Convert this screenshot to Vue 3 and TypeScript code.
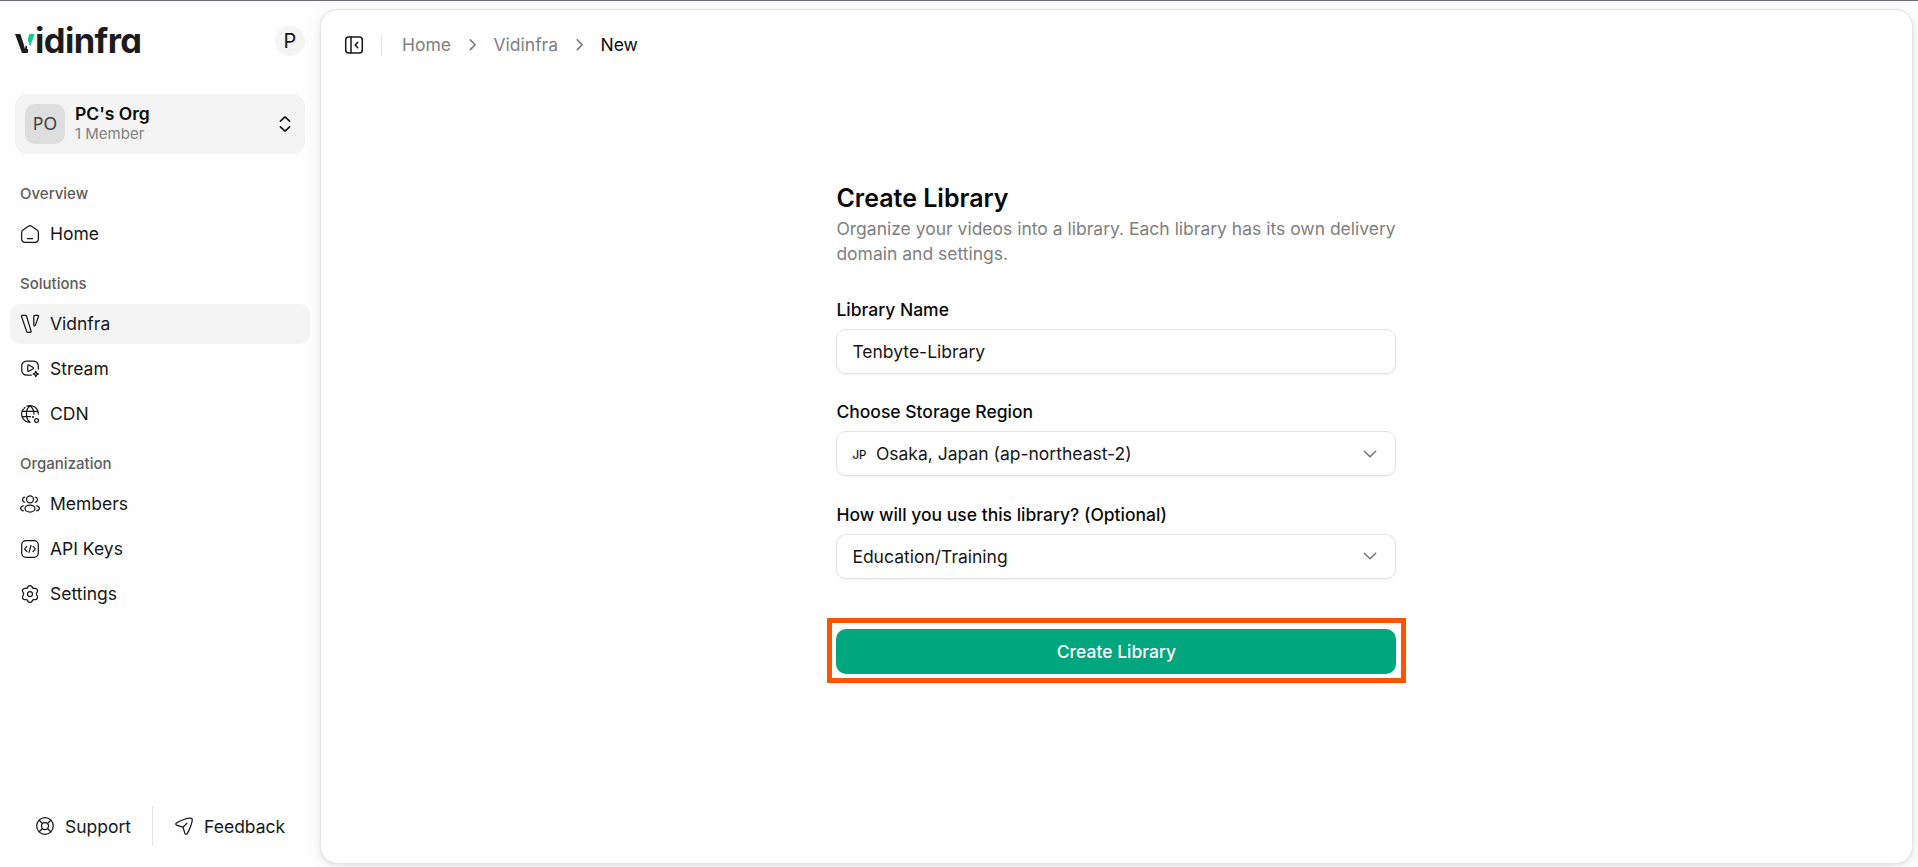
<script setup lang="ts">
interface NavItem {
  label: string
  icon: string
  active?: boolean
}
interface NavGroup {
  title: string
  items: NavItem[]
}

const groups: NavGroup[] = [
  { title: 'Overview', items: [{ label: 'Home', icon: 'home' }] },
  {
    title: 'Solutions',
    items: [
      { label: 'Vidnfra', icon: 'vid', active: true },
      { label: 'Stream', icon: 'stream' },
      { label: 'CDN', icon: 'cdn' },
    ],
  },
  {
    title: 'Organization',
    items: [
      { label: 'Members', icon: 'members' },
      { label: 'API Keys', icon: 'api' },
      { label: 'Settings', icon: 'settings' },
    ],
  },
]
</script>

<template>
  <div class="app">
    <aside class="sidebar">
      <header class="brand-row">
        <div class="logo"><span class="logo-v">v</span><span class="logo-rest">idinfra</span></div>
        <div class="user">P</div>
      </header>

      <div class="org">
        <div class="org-avatar">PO</div>
        <div class="org-text">
          <span class="org-name">PC's Org</span>
          <span class="org-sub">1 Member</span>
        </div>
        <svg class="updown" viewBox="0 0 20 20"><path d="M5.4 7.2 10 2.8l4.6 4.400M5.400 12.800l4.600 4.400 4.600-4.400" /></svg>
      </div>

      <nav class="nav">
        <section v-for="g in groups" :key="g.title" class="group">
          <h2 class="group-title">{{ g.title }}</h2>
          <div class="items">
            <a v-for="i in g.items" :key="i.label" class="item" :class="{ active: i.active }">
              <svg class="icon" viewBox="0 0 20 20">
                <template v-if="i.icon === 'home'">
                  <path d="M3.2 5.7 8.4 2.200a2.700 2.700 0 0 1 3.200 0l5.200 3.500c1 .7 1.600 1.900 1.600 3.100v5.900a3.700 3.700 0 0 1-3.700 3.600H5.300a3.700 3.700 0 0 1-3.700-3.600V8.800c0-1.200.6-2.400 1.600-3.100ZM7.400 14.500h5.200" />
                </template>
                <template v-else-if="i.icon === 'vid'">
                  <path d="M2.300 1.400h3.200c.5 0 .8.3 1 .7l4.600 15c.2.700-.1 1.200-.8 1.200H7.700c-.5 0-.9-.3-1-.700L1.500 2.500c-.2-.600.1-1.100.8-1.100ZM14.700 1.400h3c.700 0 1 .5.800 1.100l-3 8.400c-.2.600-.5.900-.9.900-.5 0-.8-.3-.8-.900V2.300c0-.5.400-.9.900-.9Z" />
                </template>
                <template v-else-if="i.icon === 'stream'">
                  <path d="M18.300 10V7A5 5 0 0 0 13.300 2H6.700a5 5 0 0 0-5 5v4.200a5 5 0 0 0 5 5h4.500" />
                  <path d="M7.800 6.500v5.200c0 .6.600.9 1.100.600l4.300-2.500c.5-.3.500-1 0-1.300L8.900 6c-.5-.3-1.100 0-1.100.500Z" />
                  <path d="m15.800 12.300.8 1.900 1.900.8-1.900.8-.8 1.900-.8-1.900-1.900-.8 1.900-.8.800-1.900Z" />
                </template>
                <template v-else-if="i.icon === 'cdn'">
                  <path d="M18.300 10A8.300 8.300 0 0 0 7 2.200M3.300 5.100A8.300 8.300 0 0 0 10 18.300M2 7.300h16M2 12.700h8.500M10 1.700c3 2.300 4 5 4 8.300M10 1.700C5.200 5.500 5.200 14.500 10 18.300" />
                  <circle cx="16.600" cy="16.600" r="1.900" />
                  <circle class="solid" cx="4.600" cy="3.800" r=".9" />
                  <circle class="solid" cx="13" cy="12.900" r="1" />
                </template>
                <template v-else-if="i.icon === 'members'">
                  <circle cx="10" cy="5.300" r="3.500" />
                  <ellipse cx="10" cy="14.600" rx="5" ry="3.500" />
                  <path d="M4.600 3.200a2.500 2.500 0 0 0 0 4.900M15.400 3.200a2.500 2.500 0 0 1 0 4.900M3.300 11.800c-3.500.8-3.500 4.200 0 5M16.700 11.800c3.500.8 3.500 4.200 0 5" />
                </template>
                <template v-else-if="i.icon === 'api'">
                  <rect x="1.700" y="1.700" width="16.600" height="16.600" rx="4.300" />
                  <path d="M6.900 7.400 5.200 9.100a1.200 1.200 0 0 0 0 1.700l1.700 1.700M13.100 7.400l1.700 1.700c.5.5.5 1.200 0 1.700l-1.700 1.700M11 6.500 9 13.400" />
                </template>
                <template v-else>
                  <circle cx="10" cy="10" r="2.500" />
                  <path d="M8 2.600C8.400 1.900 9 1.600 10 1.600s1.600.3 2 1l.5 1c.3.600 1 .9 1.600.8l1.100-.1c.8 0 1.500.4 2 1.300.5.900.6 1.600.1 2.300l-.6.9c-.4.700-.4 1.700 0 2.400l.6.900c.5.700.4 1.400-.1 2.300-.5.900-1.200 1.300-2 1.300l-1.100-.1c-.6-.1-1.300.2-1.600.8l-.5 1c-.4.700-1 1-2 1s-1.600-.3-2-1l-.5-1c-.3-.6-1-.9-1.600-.8l-1.100.1c-.8 0-1.500-.4-2-1.300-.5-.9-.6-1.600-.1-2.300l.6-.9c.4-.7.4-1.700 0-2.400l-.6-.9c-.5-.7-.4-1.400.1-2.300.5-.9 1.200-1.300 2-1.300l1.100.1c.6.100 1.300-.2 1.600-.8l.5-1Z" />
                </template>
              </svg>
              <span class="item-label">{{ i.label }}</span>
            </a>
          </div>
        </section>
      </nav>

      <footer class="foot">
        <a class="foot-link">
          <svg class="icon" viewBox="0 0 20 20">
            <circle cx="10" cy="10" r="8.300" /><circle cx="10" cy="10" r="3.500" />
            <path d="m4.200 4.200 3.300 3.300M15.800 4.200l-3.300 3.300M4.200 15.800l3.300-3.300M15.800 15.800l-3.300-3.300" />
          </svg>
          <span>Support</span>
        </a>
        <span class="foot-sep"></span>
        <a class="foot-link">
          <svg class="icon" viewBox="0 0 20 20">
            <path d="M9 11.200 12.900 7.300M17 2.200C14 1.500 5.500 4.700 2.400 7c-.9.700-.8 1.700.2 2.100L9 11.200l1.900 6.200c.4 1.100 1.600 1.200 2.300.2 2.200-3.200 5.300-11.700 5-14.200-.1-.7-.5-1.100-1.200-1.200Z" />
          </svg>
          <span>Feedback</span>
        </a>
      </footer>
    </aside>

    <main class="panel">
      <div class="crumbs">
        <svg class="icon toggle" viewBox="0 0 20 20"><rect x="1.700" y="2" width="16.600" height="16" rx="3" /><path d="M7 2v16M13.800 7.300 11.200 10l2.600 2.700" /></svg>
        <span class="crumb-sep"></span>
        <span class="crumb">Home</span>
        <svg class="chev" viewBox="0 0 18 18"><path d="m6.500 4 5 5-5 5" /></svg>
        <span class="crumb">Vidinfra</span>
        <svg class="chev" viewBox="0 0 18 18"><path d="m6.500 4 5 5-5 5" /></svg>
        <span class="crumb current">New</span>
      </div>

      <form class="form" @submit.prevent>
        <h1 class="title">Create Library</h1>
        <p class="desc">Organize your videos into a library. Each library has its own delivery domain and settings.</p>

        <div class="field">
          <label class="label">Library Name</label>
          <div class="control">Tenbyte-Library</div>
        </div>
        <div class="field">
          <label class="label">Choose Storage Region</label>
          <div class="control">
            <span class="flag">JP</span>
            <span>Osaka, Japan (ap-northeast-2)</span>
            <svg class="caret" viewBox="0 0 20 20"><path d="m4.300 7.300 5.700 5.500 5.700-5.500" /></svg>
          </div>
        </div>
        <div class="field">
          <label class="label">How will you use this library? (Optional)</label>
          <div class="control">
            <span>Education/Training</span>
            <svg class="caret" viewBox="0 0 20 20"><path d="m4.300 7.300 5.700 5.500 5.700-5.500" /></svg>
          </div>
        </div>

        <div class="highlight"><button class="submit" type="submit">Create Library</button></div>
      </form>
    </main>
  </div>
</template>

<style>
body {
  margin: 0;
  overflow: hidden;
}
</style>

<style scoped>
.app {
  box-sizing: border-box;
  width: 100vw;
  height: 100vh;
  display: flex;
  overflow: hidden;
  border-top: 1px solid #6b6b76;
  background: #fefefe;
  color: #171717;
  font-family: Inter, 'Liberation Sans', sans-serif;
  font-size: 17.5px;
}
svg {
  display: block;
  flex: none;
  fill: none;
  stroke: currentColor;
  stroke-linecap: round;
  stroke-linejoin: round;
}
.icon {
  width: 20px;
  height: 20px;
  stroke-width: 1.25;
}
.solid {
  fill: currentColor;
  stroke: none;
}
.sidebar {
  width: 320px;
  flex: none;
  display: flex;
  flex-direction: column;
}
.brand-row {
  display: flex;
  justify-content: space-between;
  align-items: center;
  height: 30px;
  padding: 25px 15px 38px;
}
.logo {
  display: flex;
  align-items: baseline;
  height: 40px;
  line-height: 40px;
  font-size: 34.5px;
  font-weight: 700;
  color: #1c1c1c;
}
.logo-v {
  width: 20.5px;
  margin-left: -0.5px;
  background:
    linear-gradient(70deg, #1c1c1c 49%, transparent 49%) no-repeat,
    linear-gradient(70deg, transparent 56%, #12d18e 56%) 0 0 / 100% 33px no-repeat;
  background-clip: text;
  -webkit-background-clip: text;
  color: transparent;
}
.logo-rest {
  font-feature-settings: 'cv11';
  letter-spacing: -0.6px;
}
.user {
  width: 30px;
  height: 30px;
  border-radius: 50%;
  background: #f4f4f4;
  font-size: 20px;
  line-height: 30px;
  text-align: center;
}
.org {
  display: flex;
  align-items: center;
  gap: 10px;
  box-sizing: border-box;
  height: 60px;
  margin: 0 15px;
  padding: 0 10px;
  border-radius: 12.5px;
  background: #f4f4f4;
}
.org-avatar {
  width: 40px;
  height: 40px;
  border-radius: 10px;
  background: #ddd;
  color: #404040;
  font-family: 'Noto Sans', sans-serif;
  font-weight: 400;
  font-size: 17.5px;
  line-height: 39px;
  text-align: center;
}
.org-text {
  flex: 1;
  display: flex;
  flex-direction: column;
}
.org-name {
  font-weight: 600;
  line-height: 20px;
  color: #0a0a0a;
}
.org-sub {
  font-size: 15px;
  line-height: 20px;
  color: #808080;
}
.updown {
  width: 20px;
  height: 20px;
  stroke-width: 1.6;
}
.nav {
  display: flex;
  flex-direction: column;
  gap: 10px;
  padding: 20px 10px 0;
}
.group-title {
  margin: 0;
  padding-left: 10px;
  height: 40px;
  line-height: 40px;
  font-size: 15px;
  font-weight: 500;
  color: #5c5c5c;
}
.items {
  display: flex;
  flex-direction: column;
  gap: 5px;
}
.item {
  display: flex;
  align-items: center;
  gap: 10px;
  height: 40px;
  padding: 0 10px;
  border-radius: 10px;
}
.item-label {
  padding-bottom: 2px;
}
.item.active {
  background: #f4f4f4;
}
.foot {
  display: flex;
  align-items: center;
  margin-top: auto;
  padding: 0 0 21px 35px;
  height: 40px;
}
.foot-link {
  display: flex;
  align-items: center;
  gap: 10px;
}
.foot-sep {
  width: 1px;
  height: 40px;
  margin: 0 21px;
  background: #e5e5e5;
}
.panel {
  box-sizing: border-box;
  flex: 1;
  margin: 8px 5px 3px 0;
  border: 1px solid #e4e4e4;
  border-radius: 17.5px;
  background: #fff;
  box-shadow: 0 2px 5px rgba(0, 0, 0, 0.07), 0 2px 18px rgba(0, 0, 0, 0.06);
}
.crumbs {
  display: flex;
  align-items: center;
  height: 20px;
  padding: 25px 0 0 23px;
  line-height: 20px;
}
.crumb-sep {
  width: 1px;
  height: 20px;
  margin: 0 20px 0 17px;
  background: #e5e5e5;
}
.toggle {
  stroke-width: 1.5;
}
.crumb {
  color: #808080;
}
.crumb.current {
  color: #0a0a0a;
}
.chev {
  width: 17.5px;
  height: 17.5px;
  margin: 0 12.5px;
  color: #737373;
  stroke-width: 1.5;
}
.form {
  width: 560px;
  margin: 128px 0 0 515.4px;
}
.title {
  margin: 0 0 3px;
  font-size: 25px;
  font-weight: 600;
  line-height: 30px;
  color: #0a0a0a;
}
.desc {
  margin: 0 0 35px;
  line-height: 25px;
  color: #808080;
}
.field {
  display: flex;
  flex-direction: column;
  gap: 10.4px;
  margin-bottom: 29.6px;
}
.label {
  font-weight: 500;
  line-height: 17.5px;
  color: #0a0a0a;
}
.control {
  display: flex;
  align-items: center;
  box-sizing: border-box;
  height: 45px;
  padding: 0 15px;
  border: 1px solid #e4e4e4;
  border-radius: 10px;
  box-shadow: 0 1px 2px rgba(0, 0, 0, 0.05);
}
.flag {
  margin: 2px 9.5px 0 0;
  font-size: 11.5px;
  font-weight: 500;
}
.caret {
  width: 20px;
  height: 20px;
  margin-left: auto;
  color: #737373;
  stroke-width: 1.5;
}
.highlight {
  box-sizing: border-box;
  width: 579px;
  height: 65px;
  margin: 39px 0 0 -9px;
  padding: 6px 5px 5px 4px;
  border: 5px solid #ff5500;
}
.submit {
  display: block;
  width: 560px;
  height: 45px;
  padding: 0;
  border: 0;
  border-radius: 10px;
  background: #00a67e;
  color: #fff;
  font: 500 17.5px Inter, 'Liberation Sans', sans-serif;
}
</style>
